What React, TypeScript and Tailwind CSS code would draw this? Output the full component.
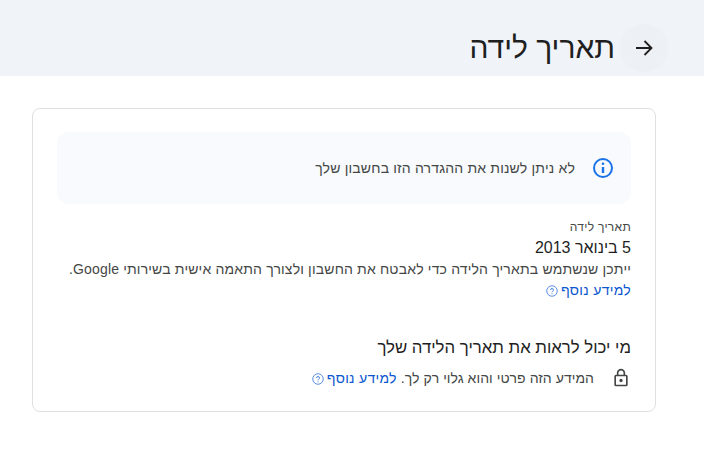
import React from 'react';

const HelpDot = () => (
  <svg viewBox="0 0 24 24" className="mr-[3px] inline-block h-3 w-3 align-[-1.5px] text-[#4c85e0]" fill="none" stroke="currentColor">
    <circle cx="12" cy="12" r="10.5" strokeWidth="1.8" />
    <path d="M15 10a3 3 0 1 0-6 0M15 10c0 2.5-3 2.5-3 4.5" strokeWidth="2" />
    <circle cx="12" cy="17.5" r="1.2" fill="currentColor" stroke="none" />
  </svg>
);

const LearnMore = () => (
  <a className="tracking-[0.3px] text-[#0b57d0]">
    למידע נוסף
    <HelpDot />
  </a>
);

export default function App() {
  return (
    <div dir="rtl" className="min-h-[452px] w-[704px] overflow-hidden bg-white font-['Liberation_Sans',sans-serif] text-[#1f1f1f]">
      <header className="flex h-[76px] items-start gap-[5px] bg-[#f0f4f9] pr-9 pt-6">
        <button className="flex h-12 w-12 items-center justify-center rounded-full bg-[#edf0f5]">
          <svg viewBox="0 0 24 24" className="h-6 w-6" fill="none" stroke="currentColor" strokeWidth="1.8">
            <path d="M4 12h15M12.5 5l7 7-7 7" />
          </svg>
        </button>
        <h1 className="text-[30px] leading-[48px] font-normal">תאריך לידה</h1>
      </header>

      <main className="mr-12 mt-8 w-[624px] rounded-lg border border-[#e0e0e0] px-6 pt-[23px] pb-[23px]">
        <div className="flex h-[72px] items-center gap-4 rounded-xl bg-[#f8fafd] pr-4 text-sm tracking-[0.18px] text-[#444746]">
          <svg viewBox="0 0 24 24" className="h-6 w-6 text-[#1a73e8]" fill="none" stroke="currentColor">
            <circle cx="12" cy="12" r="9" strokeWidth="2" />
            <path d="M12 11v6" strokeWidth="2.4" />
            <circle cx="12" cy="7.8" r="1.3" fill="currentColor" stroke="none" />
          </svg>
          <span>לא ניתן לשנות את ההגדרה הזו בחשבון שלך</span>
        </div>

        <section className="mt-[13px]">
          <div className="text-xs leading-5 font-medium tracking-[0.3px] text-[#444746]">תאריך לידה</div>
          <div className="pt-[1px] text-base leading-[20px]">5 בינואר 2013</div>
          <p className="mt-[1px] text-sm leading-[21px] tracking-[0.17px] text-[#444746]">
            ייתכן שנשתמש בתאריך הלידה כדי לאבטח את החשבון ולצורך התאמה אישית בשירותי Google.
          </p>
          <div className="text-sm leading-[21px]"><LearnMore /></div>
        </section>

        <section className="mt-[35px]">
          <h2 className="text-[16.8px] leading-6 font-medium">מי יכול לראות את תאריך הלידה שלך</h2>
          <div className="mt-2 flex items-center gap-[17px] text-sm leading-5 tracking-[0.05px] text-[#444746]">
            <svg viewBox="0 0 24 24" className="h-5 w-5 shrink-0 text-[#444746]" fill="currentColor">
              <path d="M6 22a2 2 0 0 1-2-2V10a2 2 0 0 1 2-2h1V6a5 5 0 0 1 10 0v2h1a2 2 0 0 1 2 2v10a2 2 0 0 1-2 2H6Zm0-2h12V10H6v10Zm6-3a2 2 0 1 0 0-4 2 2 0 0 0 0 4ZM9 8h6V6a3 3 0 0 0-6 0v2Z" />
            </svg>
            <span>
              המידע הזה פרטי והוא גלוי רק לך. <LearnMore />
            </span>
          </div>
        </section>
      </main>
    </div>
  );
}
